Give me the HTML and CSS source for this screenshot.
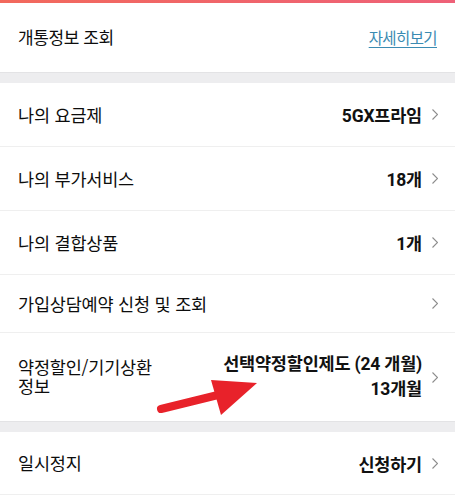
FILE: index.html
```html
<!DOCTYPE html>
<html lang="ko">
<head>
<meta charset="utf-8">
<link rel="stylesheet" href="styles.css">
</head>
<body>
<div class="page">
  <div class="topbar"></div>
  <div class="section">
    <div class="row row-first">
      <span class="label first">개통정보 조회</span>
      <a class="link">자세히보기</a>
    </div>
  </div>
  <div class="band"></div>
  <div class="section">
    <div class="row h64">
      <span class="label">나의 요금제</span>
      <span class="value">5GX프라임</span>
      <svg class="chev" viewBox="0 0 6 11"><polyline points="0.5,0.5 5.5,5.5 0.5,10.5"/></svg>
    </div>
    <div class="row h64">
      <span class="label">나의 부가서비스</span>
      <span class="value">18개</span>
      <svg class="chev" viewBox="0 0 6 11"><polyline points="0.5,0.5 5.5,5.5 0.5,10.5"/></svg>
    </div>
    <div class="row h64">
      <span class="label">나의 결합상품</span>
      <span class="value">1개</span>
      <svg class="chev" viewBox="0 0 6 11"><polyline points="0.5,0.5 5.5,5.5 0.5,10.5"/></svg>
    </div>
    <div class="row h58">
      <span class="label">가입상담예약 신청 및 조회</span>
      <span class="value"></span>
      <svg class="chev" viewBox="0 0 6 11"><polyline points="0.5,0.5 5.5,5.5 0.5,10.5"/></svg>
    </div>
    <div class="row h88 last">
      <div class="label narrow"><span class="ln">약정할인/기기상환</span><span class="ln">정보</span></div>
      <div class="value multi"><span class="vl">선택약정할인제도 (24 개월)</span><span class="vl">13개월</span></div>
      <svg class="chev" viewBox="0 0 6 11"><polyline points="0.5,0.5 5.5,5.5 0.5,10.5"/></svg>
    </div>
  </div>
  <div class="band"></div>
  <div class="section">
    <div class="row h63">
      <span class="label">일시정지</span>
      <span class="value">신청하기</span>
      <svg class="chev" viewBox="0 0 6 11"><polyline points="0.5,0.5 5.5,5.5 0.5,10.5"/></svg>
    </div>
  </div>
  <svg class="arrow" viewBox="0 0 455 495" width="455" height="495">
    <line x1="161" y1="409" x2="222" y2="394" />
    <polygon points="211,380 257,383 221,415" />
  </svg>
</div>
</body>
</html>
```

FILE: styles.css
```css
* { box-sizing: border-box; }
html, body { margin: 0; padding: 0; background: #fff; }
body {
  font-family: "Noto Sans CJK KR", "Noto Sans", sans-serif;
  color: #111;
}
.page {
  position: relative;
  width: 455px;
  height: 495px;
  overflow: hidden;
}
.topbar {
  height: 3px;
  background: linear-gradient(90deg, #f2695c, #ee6178);
}
.section { background: #fff; }
.band {
  height: 11px;
  background: #ededef;
  border-top: 1px solid #e3e3e5;
}
.row {
  display: flex;
  align-items: center;
  padding: 0 18px 0 18px;
  border-bottom: 1px solid #efefef;
}
.row.last { border-bottom: none; }
.row-first {
  height: 69px;
  border-bottom: none;
  justify-content: space-between;
  padding-bottom: 1px;
}
.h64 { height: 64px; }
.h58 { height: 58px; }
.h88 { height: 88px; }
.h63 { height: 63px; }
.label {
  font-size: 17.5px;
  line-height: 22px;
  flex: 1 1 auto;
  letter-spacing: -0.2px;
  color: #0d0d0d;
}
.label.first {
  font-size: 17px;
  letter-spacing: -0.4px;
}
.label.narrow {
  flex: 0 0 auto;
  display: flex;
  flex-direction: column;
  padding-bottom: 2px;
}
.ln {
  display: block;
  line-height: 19.5px;
  height: 19.5px;
}
.link {
  font-size: 15.5px;
  color: #3b8bb2;
  text-decoration: underline;
  text-underline-offset: 3px;
  letter-spacing: -0.6px;
}
.value {
  font-family: Roboto, "Noto Sans CJK KR", sans-serif;
  font-size: 17.5px;
  font-weight: 700;
  text-align: right;
  white-space: nowrap;
  letter-spacing: -0.2px;
  margin-left: auto;
}
.value.multi {
  flex: 1 1 auto;
  display: flex;
  flex-direction: column;
  align-items: flex-end;
}
.vl {
  display: block;
  line-height: 25px;
}
.chev {
  width: 6px;
  height: 11px;
  margin-left: 10px;
  margin-right: -1px;
  flex: 0 0 auto;
}
.chev polyline {
  fill: none;
  stroke: #8c8c8c;
  stroke-width: 1.1;
}
.arrow {
  position: absolute;
  left: 0;
  top: 0;
  pointer-events: none;
}
.arrow line {
  stroke: #e8222a;
  stroke-width: 8;
  stroke-linecap: round;
}
.arrow polygon { fill: #e8222a; }
```
